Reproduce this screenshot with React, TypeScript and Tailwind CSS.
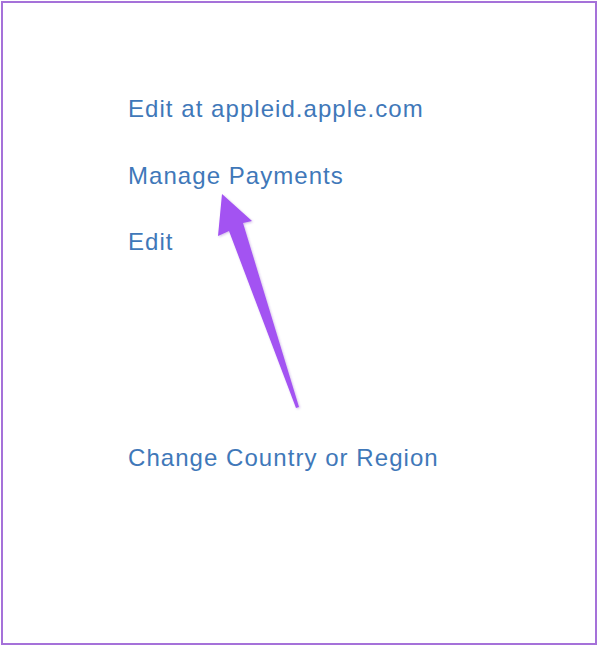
export default function App() {
  const links = [
    { label: "Edit at appleid.apple.com", mt: "mt-0" },
    { label: "Manage Payments", mt: "mt-[39px]" },
    { label: "Edit", mt: "mt-[38px]" },
    { label: "Change Country or Region", mt: "mt-[188px]" },
  ];

  return (
    <div className="w-[598px] h-[646px] bg-white p-px">
      <div
        className="relative h-full border-2 border-[#a571d9] pl-[125px] pt-[92px]"
        style={{ fontFamily: '"Liberation Sans", Arial, sans-serif' }}
      >
        <div className="flex flex-col items-start">
          {links.map((l) => (
            <a
              key={l.label}
              className={`${l.mt} text-[24px] leading-[28px] tracking-[1.05px] text-[#3f78b9] cursor-pointer`}
            >
              {l.label}
            </a>
          ))}
        </div>

        {/* annotation arrow */}
        <svg
          className="absolute left-0 top-0 pointer-events-none"
          width="594"
          height="642"
          viewBox="3 3 594 642"
        >
          <defs>
            <filter id="sh" x="-20%" y="-20%" width="140%" height="140%">
              <feDropShadow dx="1" dy="1" stdDeviation="1.2" floodColor="#6b2fb0" floodOpacity="0.3" />
            </filter>
          </defs>
          <polygon
            points="222,194 252,221 243,223 299,407 296,408 229,231 218,236"
            fill="#a352f2"
            filter="url(#sh)"
          />
        </svg>
      </div>
    </div>
  );
}
